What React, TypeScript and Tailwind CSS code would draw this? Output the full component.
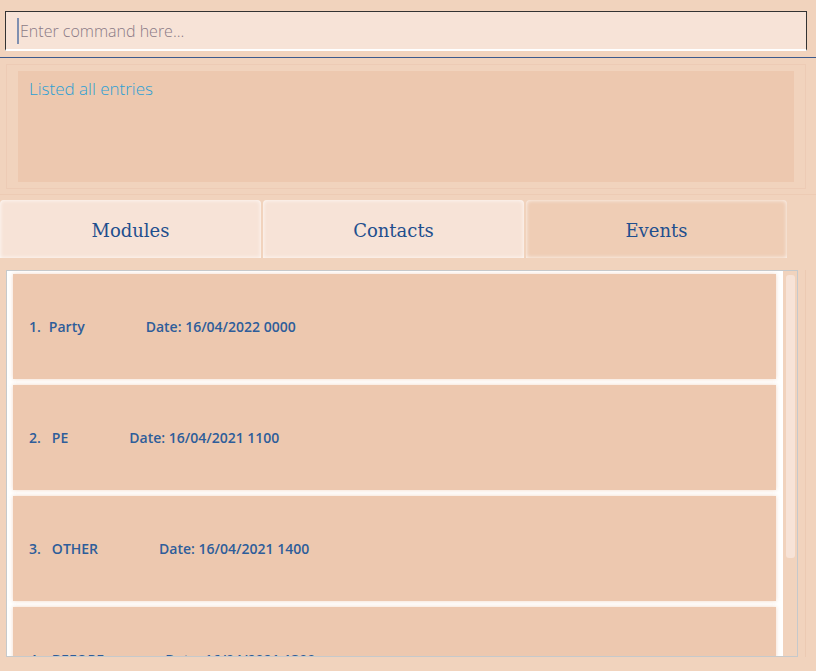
const events = [
  { id: 1, name: "Party", date: "16/04/2022 0000" },
  { id: 2, name: "PE", date: "16/04/2021 1100" },
  { id: 3, name: "OTHER", date: "16/04/2021 1400" },
  { id: 4, name: "BEFORE", date: "16/04/2021 1300" },
];

const tabs = [
  { label: "Modules", active: false },
  { label: "Contacts", active: false },
  { label: "Events", active: true },
];

export default function App() {
  return (
    <div className="flex h-[671px] w-[816px] flex-col overflow-hidden bg-[#f1d3bd] font-['Open_Sans',sans-serif]">
      {/* command box */}
      <div className="h-[58px] border-b border-[#3d5a8c] px-[5px] pt-[11px]">
        <div className="flex h-[40px] w-[802px] items-center border-x border-t border-b-2 border-x-[#333333] border-t-[#333333] border-b-white bg-[#f7e3d7] pl-[11px]">
          <span className="mr-[1px] h-[26px] w-[2px] bg-[#7f8fb0]" />
          <span className="text-[16px] font-light text-[#8a7a86]">Enter command here...</span>
        </div>
      </div>

      {/* result display */}
      <div className="border-b border-[#edcbb4] pt-[6px] pr-[10px] pb-[5px] pl-[6px]">
        <div className="h-[125px] border border-[#edcbb5] px-[11px] pt-[6px]">
          <div className="h-[111px] bg-[#edc8af] px-[11px] pt-[5px]">
            <p className="text-[17px] font-light text-[#2b9fd4]">Listed all entries</p>
          </div>
        </div>
      </div>

      {/* tabs */}
      <div className="mt-[5px] flex w-[787px] gap-[2px]">
        {tabs.map((tab) => (
          <div
            key={tab.label}
            className={`flex h-[58px] w-[261px] items-center justify-center rounded-t-[4px] pt-[3px] font-['DejaVu_Serif',serif] text-[18px] text-[#1f4f8e] shadow-[inset_0_0_4px_rgba(255,255,255,0.9)] ${
              tab.active ? "bg-[#efcdb5]" : "bg-[#f7e3d7]"
            }`}
          >
            {tab.label}
          </div>
        ))}
      </div>

      {/* event list */}
      <div className="mt-[12px] flex">
        <div className="ml-[6px] flex h-[387px] w-[792px] border border-[#c6c9cb] bg-white">
          <div className="flex flex-1 flex-col gap-[6px] overflow-hidden pt-[3px] pr-[7px] pl-[6px]">
            {events.map((ev) => (
              <div
                key={ev.id}
                className="flex h-[105px] shrink-0 items-center bg-[#edc8af] pl-[16px] text-[14px] font-semibold text-[#2e5d9a] shadow-[0_0_4px_rgba(237,200,175,0.7)]"
              >
                <span>{ev.id}.</span>
                <span className={ev.id === 1 ? "ml-[8px]" : "ml-[11px]"}>{ev.name}</span>
                <span className="ml-[61px]">Date: {ev.date}</span>
              </div>
            ))}
          </div>
          <div className="w-[14px] bg-[#f1d3bd] pt-[4px] pr-[2px] pl-[3px]">
            <div className="h-[283px] rounded-[3px] bg-[#f7e3d7]" />
          </div>
        </div>
        <div className="ml-[7px] h-[387px] w-px bg-[#eccab3]" />
      </div>
    </div>
  );
}
